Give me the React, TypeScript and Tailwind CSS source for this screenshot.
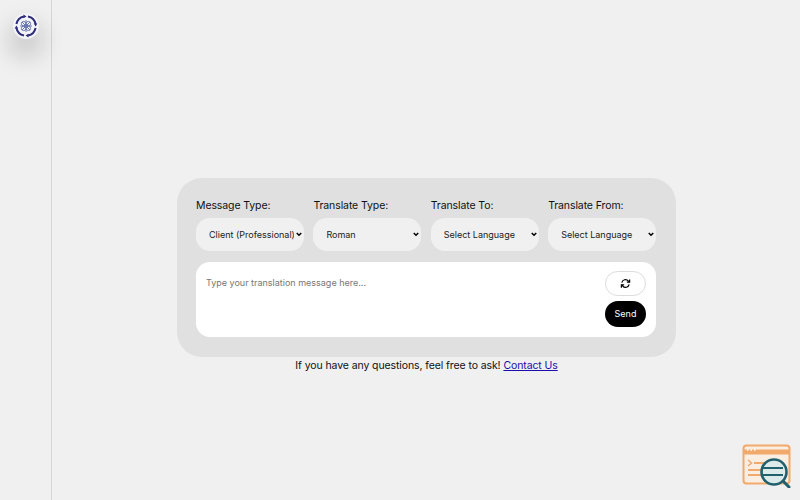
const fields = [
  { label: 'Message Type:', options: ['Client (Professional)'] },
  { label: 'Translate Type:', options: ['Roman'] },
  { label: 'Translate To:', options: ['Select Language'] },
  { label: 'Translate From:', options: ['Select Language'] },
]

function Logo() {
  return (
    <svg viewBox="0 0 26 26" className="h-[26px] w-[26px]">
      <circle cx="13" cy="13" r="12.5" fill="#f4f5fa" />
      <path d="M3.4 11A9.8 9.8 0 0 1 11 3.4M15 3.4A9.8 9.8 0 0 1 22.6 11M22.6 15A9.8 9.8 0 0 1 15 22.6M11 22.6A9.8 9.8 0 0 1 3.4 15" fill="none" stroke="#2f2d78" strokeWidth="2" />
      <path d="M10.5 1.6l3 1.8-3 1.8zM24.4 10.5l-1.8 3-1.8-3zM15.5 24.4l-3-1.8 3-1.8zM1.6 15.5l1.8-3 1.8 3z" fill="#2f2d78" />
      <g fill="none" stroke="#6d78b0" strokeWidth="1">
        <circle cx="10.6" cy="10.6" r="2.2" />
        <circle cx="15.4" cy="10.6" r="2.2" />
        <circle cx="10.6" cy="15.4" r="2.2" />
        <circle cx="15.4" cy="15.4" r="2.2" />
        <path d="M7 13h12M13 7v12M9 9l8 8M17 9l-8 8" />
      </g>
    </svg>
  )
}

function ChatIcon() {
  return (
    <svg viewBox="0 0 50 44" className="h-[44px] w-[50px]">
      <rect x="1.5" y="1.5" width="46" height="38" rx="3" fill="#faeee2" stroke="#f2a96c" strokeWidth="2" />
      <path d="M1.5 8h46" stroke="#f2a96c" strokeWidth="5" />
      <path d="M5 6h1.5M8.5 6H10M12 6h1.5" stroke="#fff" strokeWidth="1.5" />
      <path d="M6 16l3.5 3L6 22" fill="none" stroke="#f2a96c" strokeWidth="1.5" />
      <path d="M12 19h14M6 26h20M6 31h20" stroke="#f2a96c" strokeWidth="1.8" />
      <path d="M41 37l6 6" stroke="#21616e" strokeWidth="3" strokeLinecap="round" />
      <circle cx="32" cy="28" r="12.5" fill="#dcebea" stroke="#21616e" strokeWidth="2.6" />
      <path d="M21 24h20M21 31h20" stroke="#21616e" strokeWidth="1.8" />
    </svg>
  )
}

function RefreshIcon() {
  return (
    <svg viewBox="0 0 24 24" className="h-[11px] w-[11px]" fill="none" stroke="#000" strokeWidth="2.6">
      <path d="M4 10a8 8 0 0 1 14-3.5L21 9" />
      <path d="M21 3v6h-6" />
      <path d="M20 14a8 8 0 0 1-14 3.5L3 15" />
      <path d="M3 21v-6h6" />
    </svg>
  )
}

export default function App() {
  return (
    <div className="relative flex h-screen w-full overflow-hidden bg-[#f0f0f0] font-['Inter',sans-serif] text-black">
      <aside className="flex h-full w-[52px] shrink-0 justify-center border-r border-[#d6d6d6] pt-[13px]">
        <div className="h-[26px] rounded-full shadow-[0_14px_22px_6px_rgba(0,0,0,0.14)]">
          <Logo />
        </div>
      </aside>

      <main className="flex flex-1 flex-col items-center pt-[178px] pl-[1px]">
        <div className="w-[499px] rounded-[25px] bg-[#e0e0e0] pt-[19px] pr-[20px] pb-[20px] pl-[19px]">
          <div className="grid grid-cols-4 gap-x-[9.5px]">
            {fields.map((f) => (
              <label key={f.label} className="flex flex-col">
                <span className="h-[21px] text-[10.5px] leading-[17px] tracking-[-0.1px] text-[#111]">{f.label}</span>
                <div className="relative">
                  <select className="h-[33px] w-full appearance-none rounded-[14px] bg-[#f0f0f0] pr-[10px] pl-[13px] text-[9px] text-[#222] outline-none">
                    {f.options.map((o) => (
                      <option key={o}>{o}</option>
                    ))}
                  </select>
                  <svg viewBox="0 0 8 6" className="pointer-events-none absolute top-[14px] right-[2px] h-[5px] w-[6px]" fill="none" stroke="#000" strokeWidth="2">
                    <path d="M1 1l3 3 3-3" />
                  </svg>
                </div>
              </label>
            ))}
          </div>

          <div className="mt-[11px] flex h-[75px] rounded-[14px] bg-white pt-[9px] pr-[10px] pl-[10px]">
            <textarea
              placeholder="Type your translation message here..."
              className="h-[50px] flex-1 resize-none pt-[4px] text-[9px] leading-[16px] outline-none placeholder:text-[#777]"
            />
            <div className="flex w-[41px] flex-col gap-[5px]">
              <button className="flex h-[25px] items-center justify-center rounded-[14px] border border-[#dcdcdc] bg-white">
                <RefreshIcon />
              </button>
              <button className="h-[26px] rounded-[14px] bg-black text-[9px] text-white">Send</button>
            </div>
          </div>
        </div>

        <p className="pt-[1px] text-[10.5px] leading-[16px] tracking-[-0.1px] text-[#111]">
          If you have any questions, feel free to ask!{' '}
          <a href="#" className="text-[#1a0dab] underline">Contact Us</a>
        </p>
      </main>

      <div className="absolute right-[8px] bottom-[12px]">
        <ChatIcon />
      </div>
    </div>
  )
}
